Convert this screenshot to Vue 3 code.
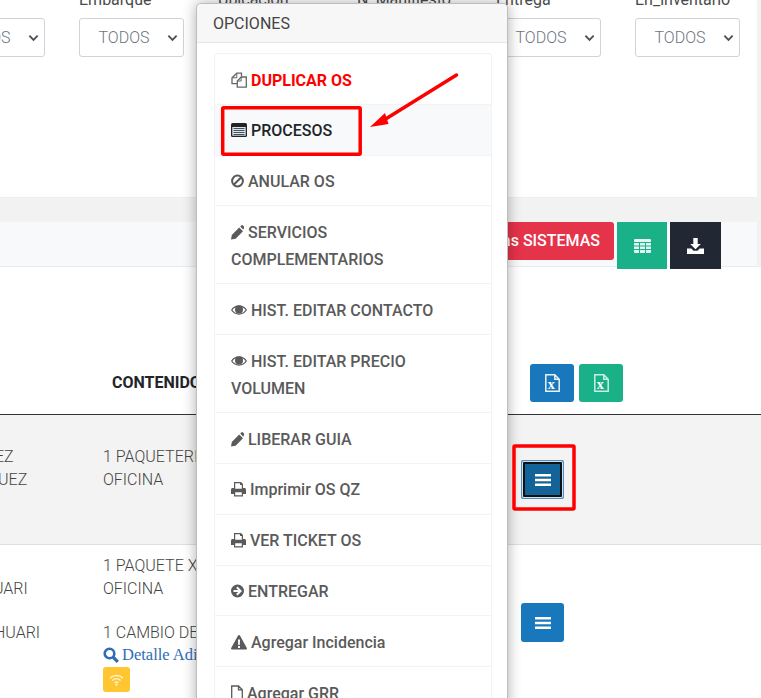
<script setup>
const filters = ['Estado', 'Embarque', 'Ubicación', 'N_Manifiesto', 'Entrega', 'En_inventario']
const widths = { files: 16, list: 16, ban: 13, pencil: 13, eye: 16, print: 15, arrow: 13, warn: 16, file: 12 }
const items = [
  { icon: 'files', text: 'DUPLICAR OS', cls: 'danger' },
  { icon: 'list', text: 'PROCESOS', cls: 'active' },
  { icon: 'ban', text: 'ANULAR OS' },
  { icon: 'pencil', text: 'SERVICIOS COMPLEMENTARIOS' },
  { icon: 'eye', text: 'HIST. EDITAR CONTACTO' },
  { icon: 'eye', text: 'HIST. EDITAR PRECIO VOLUMEN' },
  { icon: 'pencil', text: 'LIBERAR GUIA' },
  { icon: 'print', text: 'Imprimir OS QZ' },
  { icon: 'print', text: 'VER TICKET OS' },
  { icon: 'arrow', text: 'ENTREGAR' },
  { icon: 'warn', text: 'Agregar Incidencia' },
  { icon: 'file', text: 'Agregar GRR' },
]
</script>

<template>
  <div class="page">
    <section class="filters">
      <div v-for="f in filters" :key="f" class="filter">
        <span class="flabel">{{ f }}</span>
        <div class="select">
          <span class="val">TODOS</span>
          <svg class="chev" viewBox="0 0 12 8"><path d="M1.5 1.5 6 6l4.500-4.500" /></svg>
        </div>
      </div>
    </section>

    <section class="toolbar">
      <button class="tbtn red">Notas SISTEMAS</button>
      <button class="tbtn green square">
        <svg viewBox="0 0 17 14" width="17" height="14"><path fill="#e3f6f0" d="M1 0h15a1 1 0 0 1 1 1v12a1 1 0 0 1-1 1H1a1 1 0 0 1-1-1V1a1 1 0 0 1 1-1z" /><path stroke="#1ab188" stroke-width="1" d="M0 3.500h17M0 7h17M0 10.500h17M5.500 3.500V14M11.500 3.500V14" /></svg>
      </button>
      <button class="tbtn dark square">
        <svg viewBox="0 0 17 16" width="17" height="16"><path fill="#fff" d="M6.300 0h4.400v6h3.100L8.500 11.300 3.200 6h3.100zM0 10.500h4.300l2.200 2.200h4l2.200-2.200H17V16H0z" /></svg>
      </button>
    </section>

    <section class="table">
      <div class="thead">
        <strong class="th">CONTENIDO</strong>
        <div class="xls">
          <button class="btn blue small"><svg viewBox="0 0 15 18" width="15" height="18"><path fill="none" stroke="#e8f2f9" stroke-width="1.500" d="M.8.8h9l4.400 4.400v12H.8zM9.800.8v4.400h4.400" /><text x="2.800" y="15" class="xt">x</text></svg></button>
          <button class="btn green small"><svg viewBox="0 0 15 18" width="15" height="18"><path fill="none" stroke="#c9eee2" stroke-width="1.500" d="M.8.8h9l4.400 4.400v12H.8zM9.800.8v4.400h4.400" /><text x="2.800" y="15" class="xt">x</text></svg></button>
        </div>
      </div>
      <div class="row shaded">
        <div class="name"><p class="ez">EZ</p><p class="uez">UEZ</p></div>
        <div class="content"><p>1 PAQUETERIA</p><p>OFICINA</p></div>
        <div class="act">
          <button class="btn blue menu focused"><svg viewBox="0 0 16 12" width="16" height="12"><path fill="#fff" d="M0 0h16v2.400H0zM0 4.800h16v2.400H0zM0 9.600h16V12H0z" /></svg></button>
        </div>
      </div>
      <div class="row second-row">
        <div class="name"><p class="n1">UARI</p><p class="n2">HUARI</p></div>
        <div class="content">
          <p>1 PAQUETE X</p><p>OFICINA</p>
          <p class="gap">1 CAMBIO DE</p>
          <p class="detail"><svg viewBox="0 0 16 16" width="16" height="16"><circle cx="6.500" cy="6.500" r="4.800" fill="none" stroke="#2f6db5" stroke-width="2.600" /><path d="m10 10 4.800 4.800" stroke="#2f6db5" stroke-width="3.200" /></svg>Detalle Adicional</p>
          <span class="wifi"><svg viewBox="0 0 16 13" width="15" height="12"><path d="M1 4.500c4-3.700 10-3.700 14 0M3.500 7c2.600-2.400 6.400-2.400 9 0M6 9.400c1.200-1 2.800-1 4 0" fill="none" stroke="#fff2c9" stroke-width="1.600" /><circle cx="8" cy="11.500" r="1.300" fill="#fff2c9" /></svg></span>
        </div>
        <div class="act">
          <button class="btn blue menu"><svg viewBox="0 0 16 12" width="16" height="12"><path fill="#fff" d="M0 0h16v2.400H0zM0 4.800h16v2.400H0zM0 9.600h16V12H0z" /></svg></button>
        </div>
      </div>
    </section>

    <aside class="modal">
      <header class="mhead">OPCIONES</header>
      <ul class="list">
        <li v-for="it in items" :key="it.text" :class="['item', it.cls]">
          <svg class="ic" :viewBox="`0 0 ${widths[it.icon]} 16`" :width="widths[it.icon]" height="16">
            <template v-if="it.icon === 'files'">
              <path fill="none" stroke="#666" stroke-width="1.300" d="M10.500 4.500V1.200H5.800L1 5.800v5.900h5.300" />
              <path fill="none" stroke="#666" stroke-width="1.300" d="M10.200 5H15.300V15.200H6.300V9z" />
              <path fill="none" stroke="#666" stroke-width="1" d="M5.800 1.200v4.600H1M10.200 5v4H6.300" />
            </template>
            <template v-else-if="it.icon === 'list'">
              <rect x="0" y="1" width="16" height="14" rx="1.500" fill="currentColor" />
              <path fill="#dfe4ea" d="M1.300 5h13.400v8.700H1.300z" />
              <path stroke="#44505c" d="M2.500 6.500h11M2.500 8.500h11M2.500 10.500h11M2.500 12.500h11" />
            </template>
            <template v-else-if="it.icon === 'ban'">
              <circle cx="6.500" cy="8" r="5.400" fill="none" stroke="currentColor" stroke-width="2" />
              <path stroke="currentColor" stroke-width="2" d="M2.700 11.800 10.300 4.200" />
            </template>
            <template v-else-if="it.icon === 'pencil'">
              <path fill="currentColor" d="M0 15.500l.8-4.600 7.400-7.400 3.800 3.800-7.400 7.400zM9.200 2.500l1.100-1.100a1.200 1.200 0 0 1 1.700 0l1.200 1.200a1.200 1.200 0 0 1 0 1.700l-1.100 1.100z" />
            </template>
            <template v-else-if="it.icon === 'eye'">
              <path fill="currentColor" fill-rule="evenodd" d="M0 8C3.800 1.800 12.200 1.800 16 8 12.200 14.200 3.800 14.200 0 8zm1.400 0c3.300 4.700 9.900 4.700 13.200 0-3.300-4.700-9.900-4.700-13.200 0z" />
              <circle cx="8" cy="7.600" r="4" fill="currentColor" />
            </template>
            <template v-else-if="it.icon === 'print'">
              <path fill="currentColor" fill-rule="evenodd" d="M3 1h7L12 3v4h1.500c.8 0 1.500.7 1.500 1.500v4.500h-3v2.500H3V13H0V8.500C0 7.700.7 7 1.500 7H3zm1.200 1.200v5.600h6.600V4H9V2.200zM4.200 11.300v3h6.600v-3z" />
            </template>
            <template v-else-if="it.icon === 'arrow'">
              <circle cx="6.500" cy="8" r="6.500" fill="currentColor" />
              <path fill="#fff" d="M6.500 3.500 11 8l-4.500 4.500-1.400-1.400L7.200 9H2.500V7h4.700L5.100 4.900z" />
            </template>
            <template v-else-if="it.icon === 'warn'">
              <path fill="currentColor" d="M8 1c.5 0 .9.300 1.100.7l6.700 12.200c.4.700-.1 1.600-.9 1.600H1.100c-.8 0-1.300-.9-.9-1.600L6.900 1.700C7.100 1.300 7.500 1 8 1z" />
              <path fill="#fff" d="M7 5.500h2l-.2 5.500H7.200zM7 12h2v2H7z" />
            </template>
            <template v-else>
              <path fill="none" stroke="currentColor" stroke-width="1.300" d="M.7 1H7.500L11.300 4.800V15.300H.7zM7.500 1v3.800h3.800" />
            </template>
          </svg>
          {{ it.text }}
        </li>
      </ul>
    </aside>

    <svg class="annot" viewBox="0 0 761 698" width="761" height="698">
      <rect x="222.700" y="107.700" width="137.500" height="46.500" fill="none" stroke="#f00" stroke-width="3.500" rx="1" />
      <rect x="514" y="446" width="60" height="63" fill="none" stroke="#f00" stroke-width="3.500" rx="1" />
      <path d="M456.500 75 384 120" stroke="#f00" stroke-width="3.500" stroke-linecap="round" />
      <path d="M370 127 385 113 388.500 124z" fill="#f00" />
    </svg>
  </div>
</template>

<style scoped>
.page {
  position: relative;
  width: 761px;
  height: 698px;
  overflow: hidden;
  background: #f2f2f2;
  font-family: Roboto, "Liberation Sans", sans-serif;
  color: #4f4f4f;
}
.filters {
  width: 757px;
  height: 198px;
  background: #fff;
  border-bottom: 1px solid #eeeeee;
  box-sizing: border-box;
  display: flex;
  align-items: flex-start;
  gap: 34px;
}
.filter { width: 105px; flex: none; }
.filter:first-child { margin-left: -60px; }
.flabel {
  display: block;
  font-size: 16px;
  line-height: 20px;
  margin-top: -10px;
  height: 28px;
  color: #4a4a4a;
  white-space: nowrap;
}
.select {
  height: 39px;
  border: 1px solid #ced4da;
  border-radius: 3px;
  box-sizing: border-box;
  display: flex;
  align-items: center;
  position: relative;
  background: #fff;
  color: #6d7480;
  font-size: 16px;
  font-weight: 300;
}
.val { margin-left: 18.500px; }
.chev { position: absolute; right: 5px; top: 15px; width: 11px; height: 8px; }
.chev path { fill: none; stroke: #4a4f57; stroke-width: 2; }
.toolbar {
  width: 757px;
  height: 45px;
  margin-top: 24px;
  background: #f8f9fa;
  border-bottom: 1px solid #e9ecef;
  box-sizing: border-box;
  display: flex;
  align-items: flex-start;
  justify-content: flex-end;
  padding-right: 36px;
  gap: 2px;
}
.tbtn {
  border: 0;
  font: 500 16px Roboto, sans-serif;
  color: #fff;
  padding: 0;
}
.red {
  background: #e5334a;
  height: 38px;
  width: 180px;
  border-radius: 3px;
  text-align: right;
  padding: 0 14px 2px 0;
  box-sizing: border-box;
  margin-right: 1px;
}
.square { height: 47px; display: flex; align-items: center; justify-content: center; }
.green { background: #1ab188; width: 50px; }
.dark { background: #222734; width: 51px; margin-left: 1px; }
.table { background: #fff; height: 431px; }
.thead {
  height: 148px;
  border-bottom: 1px solid #333;
  box-sizing: border-box;
  display: flex;
  align-items: flex-end;
}
.th {
  flex: 0 0 418px;
  margin-left: 112px;
  margin-bottom: 21px;
  font-size: 16px;
  font-weight: 700;
  color: #212529;
  line-height: 20px;
}
.xls { margin-bottom: 12px; display: flex; gap: 5px; }
.btn {
  border: 0;
  padding: 0;
  display: flex;
  align-items: center;
  justify-content: center;
  border-radius: 3px;
}
.small { width: 44px; height: 38px; }
.blue { background: #1878bb; }
.btn.green { background: #1ab188; }
.xt { font: 700 14px "Liberation Serif", serif; fill: #fff; }
.row {
  display: grid;
  grid-template-columns: 103px 418px 1fr;
  font-size: 16px;
  font-weight: 300;
  color: #444;
  line-height: 23px;
}
.row p { margin: 0; white-space: nowrap; }
.shaded {
  height: 130px;
  background: #f3f3f3;
  border-bottom: 1px solid #dedede;
  box-sizing: border-box;
  padding-top: 30px;
}
.second-row { height: 153px; }
.ez { margin-left: -5px !important; }
.uez { margin-left: -2px !important; }
.second-row .name { padding-top: 32px; }
.n1 { margin-left: -7px !important; }
.n2 { margin: 21px 0 0 -6px !important; }
.second-row .content { padding-top: 9px; }
.gap { margin-top: 21px !important; }
.detail {
  font-family: "Liberation Serif", serif;
  font-weight: 400;
  color: #2f6db5;
  font-size: 16.500px;
  line-height: 21px;
  display: flex;
  align-items: center;
  gap: 3px;
}
.wifi {
  display: flex;
  width: 27px;
  height: 25px;
  background: #ffc632;
  border-radius: 3px;
  align-items: center;
  justify-content: center;
  margin-top: 2px;
}
.menu { width: 43px; height: 39px; }
.shaded .menu { margin-top: 15px; }
.second-row .menu { margin-top: 58px; }
.focused {
  background: #136399;
  box-shadow: inset 0 0 0 1px #4f8fc4, inset 0 0 0 2px #cfe0ee, inset 0 0 0 4px #111;
}
.modal {
  position: absolute;
  left: 196px;
  top: 3px;
  width: 312px;
  height: 760px;
  background: #fff;
  border: 1px solid #bdbdbd;
  border-radius: 5px;
  box-sizing: border-box;
  box-shadow: 0 0 14px rgba(0, 0, 0, 0.32);
}
.mhead {
  height: 39px;
  box-sizing: border-box;
  background: #f7f7f7;
  border-bottom: 1px solid #e6e6e6;
  font-size: 16px;
  line-height: 40px;
  padding-left: 16px;
  color: #444;
  border-radius: 5px 5px 0 0;
}
.list {
  list-style: none;
  margin: 10px 0 0 17px;
  padding: 0;
  width: 278px;
  border: 1px solid #f3f3f3;
  border-radius: 3px;
  box-sizing: border-box;
}
.item {
  padding: 12.500px 16px 10.100px;
  font-size: 16px;
  font-weight: 500;
  line-height: 27.200px;
  color: #5a5a5a;
  border-bottom: 1px solid #f3f3f3;
}
.ic { vertical-align: -2px; }
.danger { color: #f00; font-weight: 700; }
.active { background: #f8f9fa; color: #212529; }
.annot { position: absolute; left: 0; top: 0; pointer-events: none; }
</style>

<style>
html, body { margin: 0; background: #f2f2f2; }
</style>
